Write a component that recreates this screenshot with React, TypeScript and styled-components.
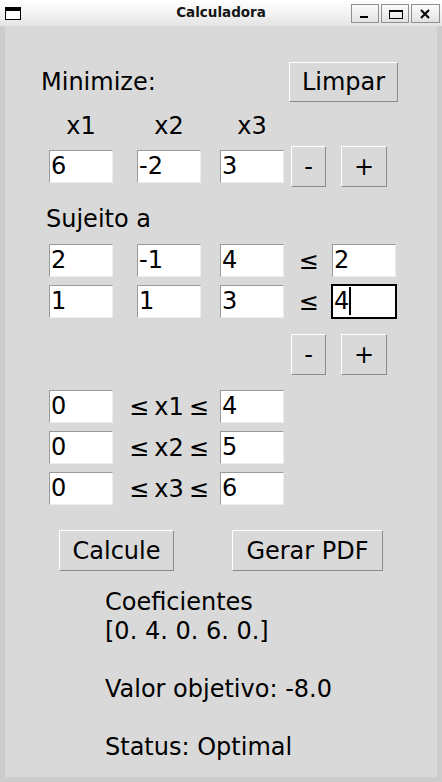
import React from 'react';
import styled, { createGlobalStyle } from 'styled-components';

const Global = createGlobalStyle`
  html, body { margin: 0; padding: 0; background: #d9d9d9; }
  body { width: 442px; height: 782px; overflow: hidden; font-family: "DejaVu Sans", "Noto Sans", sans-serif; }
  * { box-sizing: border-box; }
`;

const Window = styled.div`
  width: 442px;
  height: 782px;
  display: flex;
  flex-direction: column;
`;

const TitleBar = styled.div`
  flex: none;
  height: 26px;
  display: grid;
  grid-template-columns: 1fr auto 1fr;
  align-items: center;
  background: linear-gradient(#ffffff, #f3f3f3 50%, #e4e4e4);
`;

const WinIcon = styled.svg`
  margin-left: 5px;
  display: block;
`;

const Title = styled.div`
  font-family: "DejaVu Sans", sans-serif;
  font-weight: bold;
  font-size: 13.5px;
  color: #151515;
  line-height: 16px;
  margin-top: -2px;
`;

const TitleButtons = styled.div`
  justify-self: end;
  display: flex;
  gap: 2px;
  padding-right: 2px;
  align-self: start;
  margin-top: 4px;
`;

const TitleBtn = styled.div<{ $w: number }>`
  width: ${p => p.$w}px;
  height: 19px;
  border: 1px solid #8e8e8e;
  background: linear-gradient(#fbfbfb, #e2e2e2);
  display: flex;
`;

const Client = styled.div`
  flex: 1;
  background: #d9d9d9;
  border: 5px solid #cccccc;
  border-top: none;
  display: flex;
  flex-direction: column;
`;

const Line = styled.div<{ $mt: number; $h: number; $pl?: number; $pr?: number; $between?: boolean }>`
  flex: none;
  margin-top: ${p => p.$mt}px;
  height: ${p => p.$h}px;
  padding-left: ${p => p.$pl ?? 0}px;
  padding-right: ${p => p.$pr ?? 0}px;
  display: flex;
  align-items: center;
  justify-content: ${p => (p.$between ? 'space-between' : 'flex-start')};
`;

const Label = styled.span<{ $ml?: number; $w?: number; $center?: boolean }>`
  flex: none;
  margin-left: ${p => p.$ml ?? 0}px;
  width: ${p => (p.$w ? `${p.$w}px` : 'auto')};
  text-align: ${p => (p.$center ? 'center' : 'left')};
  font-size: 24px;
  line-height: 28px;
  color: #000;
  white-space: pre;
`;

const BoundLabel = styled(Label)`
  word-spacing: -2.5px;
`;

const Entry = styled.div<{ $ml: number; $focused?: boolean }>`
  flex: none;
  width: 64px;
  height: 33px;
  margin-left: ${p => p.$ml}px;
  background: #ffffff;
  border: 1px solid;
  border-color: ${p => (p.$focused ? '#000 #000 #000 #000' : '#9a9a9a #ededed #ededed #9a9a9a')};
  box-shadow: ${p => (p.$focused ? '0 0 0 1px #000' : 'none')};
  padding: 1px 0 0 1px;
  display: flex;
  align-items: flex-start;
  font-size: 24px;
  line-height: 28px;
  color: #000;
`;

const Caret = styled.span`
  display: inline-block;
  width: 2px;
  height: 28px;
  background: #000;
`;

const Button = styled.div<{ $w: number; $h: number; $ml?: number }>`
  flex: none;
  width: ${p => p.$w}px;
  height: ${p => p.$h}px;
  margin-left: ${p => p.$ml ?? 0}px;
  background: #d9d9d9;
  border: 1px solid;
  border-color: #ffffff #8a8a8a #8a8a8a #ffffff;
  display: flex;
  align-items: center;
  justify-content: center;
  font-size: 24px;
  line-height: 28px;
  color: #000;
`;

const Output = styled.div`
  margin-top: 17px;
  padding-left: 100px;
  font-size: 24px;
  line-height: 29px;
  color: #000;
  white-space: pre;
`;

const coefs = [
  ['2', '-1', '4', '2'],
  ['1', '1', '3', '4'],
];

const bounds = [
  ['0', 'x1', '4'],
  ['0', 'x2', '5'],
  ['0', 'x3', '6'],
];

export default function App() {
  return (
    <Window>
      <Global />
      <TitleBar>
        <div>
          <WinIcon width="16" height="13" viewBox="0 0 16 13">
            <rect x="0.5" y="0.5" width="15" height="12" fill="#fff" stroke="#000" />
            <rect x="0" y="0" width="16" height="4" fill="#000" />
          </WinIcon>
        </div>
        <Title>Calculadora</Title>
        <TitleButtons>
          <TitleBtn $w={28}>
            <svg width="26" height="17" viewBox="0 0 26 17">
              <rect x="8" y="11" width="8" height="2" fill="#000" />
            </svg>
          </TitleBtn>
          <TitleBtn $w={28}>
            <svg width="26" height="17" viewBox="0 0 26 17">
              <rect x="7.5" y="5.5" width="13" height="8" fill="none" stroke="#000" />
              <rect x="7" y="5" width="14" height="2" fill="#000" />
            </svg>
          </TitleBtn>
          <TitleBtn $w={29}>
            <svg width="27" height="17" viewBox="0 0 27 17">
              <path d="M9 5 L17 13 M17 5 L9 13" stroke="#000" strokeWidth="2" />
            </svg>
          </TitleBtn>
        </TitleButtons>
      </TitleBar>
      <Client>
        <Line $mt={36} $h={40} $pl={36} $pr={39} $between>
          <Label>Minimize:</Label>
          <Button $w={109} $h={40}>Limpar</Button>
        </Line>
        <Line $mt={10} $h={28}>
          <Label $ml={44} $w={64} $center>x1</Label>
          <Label $ml={24} $w={64} $center>x2</Label>
          <Label $ml={19} $w={64} $center>x3</Label>
        </Line>
        <Line $mt={6} $h={41}>
          <Entry $ml={44}>6</Entry>
          <Entry $ml={24}>-2</Entry>
          <Entry $ml={19}>3</Entry>
          <Button $w={35} $h={41} $ml={7}>-</Button>
          <Button $w={46} $h={41} $ml={15}>+</Button>
        </Line>
        <Line $mt={18} $h={28} $pl={41}>
          <Label>Sujeito a</Label>
        </Line>
        {coefs.map((row, i) => (
          <Line key={i} $mt={i === 0 ? 11 : 8} $h={33}>
            <Entry $ml={44}>{row[0]}</Entry>
            <Entry $ml={24}>{row[1]}</Entry>
            <Entry $ml={19}>{row[2]}</Entry>
            <Label $ml={7} $w={35} $center>≤</Label>
            <Entry $ml={6} $focused={i === 1}>
              {row[3]}
              {i === 1 && <Caret />}
            </Entry>
          </Line>
        ))}
        <Line $mt={16} $h={41}>
          <Button $w={35} $h={41} $ml={286}>-</Button>
          <Button $w={46} $h={41} $ml={15}>+</Button>
        </Line>
        {bounds.map((b, i) => (
          <Line key={b[1]} $mt={i === 0 ? 15 : 8} $h={33}>
            <Entry $ml={44}>{b[0]}</Entry>
            <BoundLabel $ml={16} $w={91}>{`≤ ${b[1]} ≤`}</BoundLabel>
            <Entry $ml={0}>{b[2]}</Entry>
          </Line>
        ))}
        <Line $mt={25} $h={41}>
          <Button $w={115} $h={41} $ml={54}>Calcule</Button>
          <Button $w={151} $h={41} $ml={58}>Gerar PDF</Button>
        </Line>
        <Output>{'Coeficientes\n[0. 4. 0. 6. 0.]\n\nValor objetivo: -8.0\n\nStatus: Optimal'}</Output>
      </Client>
    </Window>
  );
}
